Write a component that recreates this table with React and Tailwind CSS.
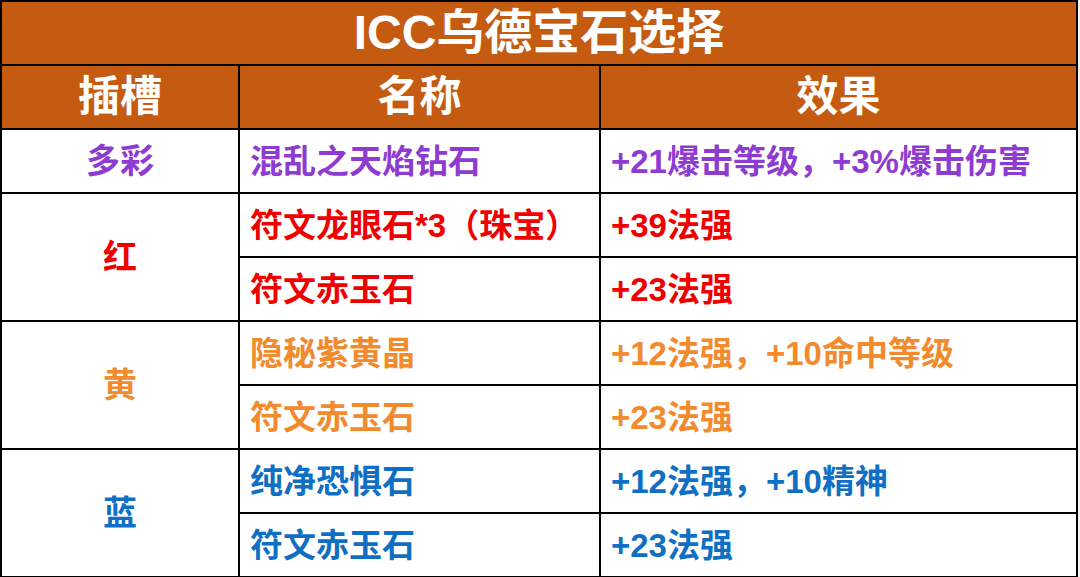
const FONT = { fontFamily: '"Liberation Sans", "Noto Sans CJK SC", sans-serif' }

const GROUPS = [
  {
    slot: '多彩',
    color: 'text-[#8e3bd2]',
    rows: [['混乱之天焰钻石', '+21爆击等级，+3%爆击伤害']],
  },
  {
    slot: '红',
    color: 'text-[#f00000]',
    rows: [
      ['符文龙眼石*3（珠宝）', '+39法强'],
      ['符文赤玉石', '+23法强'],
    ],
  },
  {
    slot: '黄',
    color: 'text-[#f28a2e]',
    rows: [
      ['隐秘紫黄晶', '+12法强，+10命中等级'],
      ['符文赤玉石', '+23法强'],
    ],
  },
  {
    slot: '蓝',
    color: 'text-[#0f6fc4]',
    rows: [
      ['纯净恐惧石', '+12法强，+10精神'],
      ['符文赤玉石', '+23法强'],
    ],
  },
]

export default function App() {
  return (
    <div className="w-[1080px] h-[577px] bg-[#f4f4f4] overflow-hidden" style={FONT}>
      <table className="w-[1078px] border-collapse table-fixed font-bold">
        <colgroup>
          <col className="w-[238px]" />
          <col className="w-[361px]" />
          <col />
        </colgroup>
        <thead>
          <tr className="h-[64px] bg-[#c55a11] text-white">
            <th colSpan={3} className="border-2 border-black text-[48px] leading-none font-bold">
              ICC乌德宝石选择
            </th>
          </tr>
          <tr className="h-[64px] bg-[#c55a11] text-white">
            <th className="border-2 border-black text-[42px] leading-none font-bold">插槽</th>
            <th className="border-2 border-black text-[42px] leading-none font-bold">名称</th>
            <th className="border-2 border-black text-[42px] leading-none font-bold">效果</th>
          </tr>
        </thead>
        <tbody className="bg-white">
          {GROUPS.map(g =>
            g.rows.map(([name, effect], i) => (
              <tr key={g.slot + i} className={`h-[64px] ${g.color}`}>
                {i === 0 && (
                  <td rowSpan={g.rows.length} className="border-2 border-black text-center text-[34px] leading-none">
                    {g.slot}
                  </td>
                )}
                <td className="border-2 border-black pl-[10px] text-[33px] leading-none whitespace-nowrap">{name}</td>
                <td className="border-2 border-black pl-[10px] text-[33px] leading-none whitespace-nowrap">{effect}</td>
              </tr>
            ))
          )}
        </tbody>
      </table>
    </div>
  )
}
